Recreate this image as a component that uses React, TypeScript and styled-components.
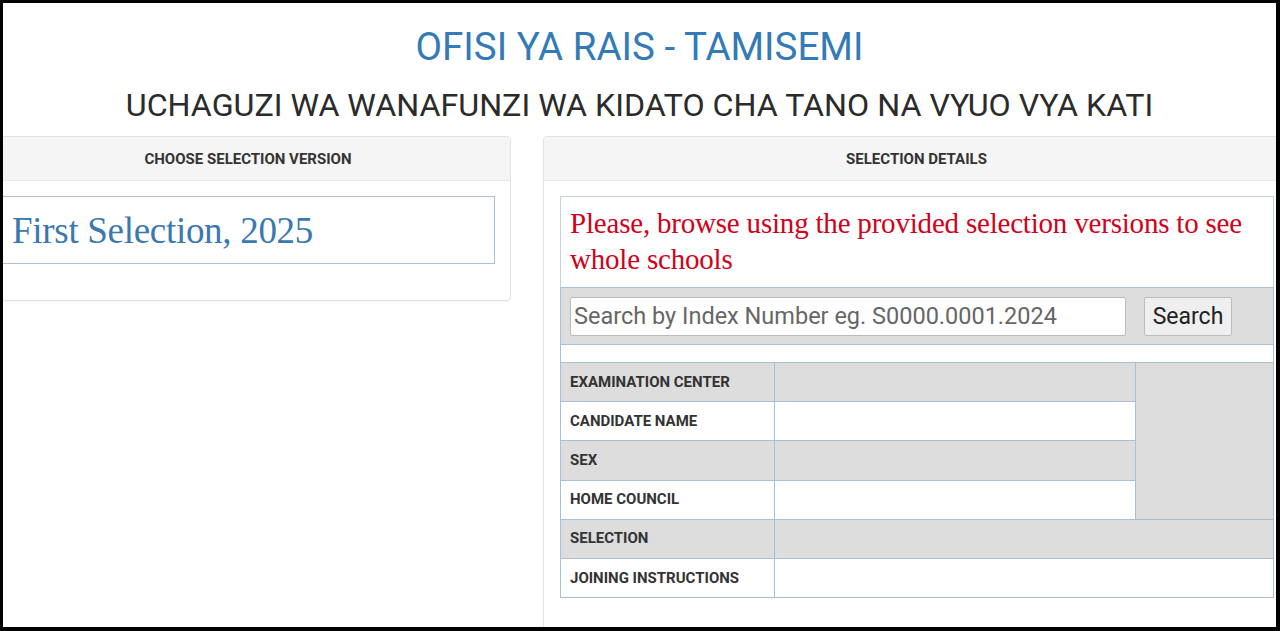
import * as React from "react";
import styled, { createGlobalStyle } from "styled-components";

const GlobalStyle = createGlobalStyle`
  html, body {
    margin: 0;
    padding: 0;
    background: #000;
  }
  body {
    font-family: Roboto, "Liberation Sans", sans-serif;
    color: #333;
  }
`;

const Frame = styled.div`
  box-sizing: border-box;
  width: 1280px;
  height: 631px;
  border-style: solid;
  border-color: #000;
  border-width: 3px 4px 4px 3px;
  background: #fff;
  overflow: hidden;
`;

const Heading = styled.h1<{ $accent?: boolean }>`
  margin: 0;
  text-align: center;
  font-weight: 400;
  font-size: ${(p) => (p.$accent ? "38.5px" : "32.2px")};
  line-height: 1;
  color: ${(p) => (p.$accent ? "#337ab7" : "#2b2b2b")};
  white-space: nowrap;
`;

const Header = styled.header`
  display: flex;
  flex-direction: column;
  gap: 22px;
  padding: 25px 0 0;
  height: 133px;
  box-sizing: border-box;
`;

const Row = styled.div`
  display: flex;
  gap: 32px;
  margin-left: -18px;
  align-items: flex-start;
`;

const Panel = styled.section<{ $width: number }>`
  flex: 0 0 ${(p) => p.$width}px;
  box-sizing: border-box;
  border: 1px solid #e3e3e3;
  border-radius: 4px;
  background: #fff;
  box-shadow: 0 1px 1px rgba(0, 0, 0, 0.04);
`;

const PanelHeading = styled.div`
  height: 43px;
  display: flex;
  align-items: center;
  justify-content: center;
  background: #f5f5f5;
  border-bottom: 1px solid #e8e8e8;
  border-radius: 3px 3px 0 0;
  font-size: 15px;
  font-weight: 700;
  color: #333;
`;

const PanelBody = styled.div<{ $bottom?: number; $left?: number }>`
  padding: 15px 15px ${(p) => p.$bottom ?? 15}px ${(p) => p.$left ?? 15}px;
`;

const VersionLink = styled.a`
  display: block;
  box-sizing: border-box;
  height: 68px;
  padding: 12px 10px 0;
  border: 1px solid #a9bfd2;
  font-family: "Liberation Serif", "DejaVu Serif", serif;
  font-size: 37px;
  color: #3a78b0;
  text-decoration: none;
  letter-spacing: -0.3px;
`;

const DetailsTable = styled.table`
  width: 100%;
  border-collapse: collapse;
  table-layout: fixed;
  font-size: 15px;
`;

const Cell = styled.td<{ $shade?: boolean }>`
  border: 1px solid #a9bfd2;
  height: 39.2px;
  padding: 0 9px 1px;
  box-sizing: border-box;
  background: ${(p) => (p.$shade ? "#dddddd" : "#fff")};
`;

const Label = styled(Cell)`
  font-weight: 700;
  color: #333;
  white-space: nowrap;
`;

const Notice = styled.td`
  border: 1px solid #c4d3e0;
  border-bottom-color: #a9bfd2;
  height: 91px;
  padding: 8px 9px 0;
  box-sizing: border-box;
  vertical-align: top;
  font-family: "Liberation Serif", "DejaVu Serif", serif;
  font-size: 29px;
  line-height: 36px;
  color: #d0021b;
  letter-spacing: -0.2px;
`;

const SearchCell = styled.td`
  border: 1px solid #a9bfd2;
  background: #dddddd;
  height: 57px;
  padding: 0 9px;
  box-sizing: border-box;
`;

const SearchForm = styled.form`
  display: flex;
  align-items: center;
  gap: 18px;
`;

const SearchInput = styled.input`
  width: 556px;
  height: 39px;
  box-sizing: border-box;
  border: 1px solid #bbb;
  border-radius: 2px;
  padding: 0 3px;
  font-family: Roboto, "Liberation Sans", sans-serif;
  font-size: 23.5px;
  color: #333;
  background: #fff;
  &::placeholder {
    color: #666;
  }
`;

const SearchButton = styled.button`
  height: 39px;
  width: 88px;
  box-sizing: border-box;
  border: 1px solid #bdbdbd;
  border-radius: 2px;
  background: #efefef;
  font-family: Roboto, "Liberation Sans", sans-serif;
  font-size: 23px;
  color: #222;
  padding: 0;
`;

const Spacer = styled.td`
  border: 1px solid #a9bfd2;
  height: 17px;
  padding: 0;
`;

export default function App() {
  return (
    <Frame>
      <GlobalStyle />
      <Header>
        <Heading $accent>OFISI YA RAIS - TAMISEMI</Heading>
        <Heading as="h2">
          UCHAGUZI WA WANAFUNZI WA KIDATO CHA TANO NA VYUO VYA KATI
        </Heading>
      </Header>
      <Row>
        <Panel $width={526}>
          <PanelHeading>CHOOSE SELECTION VERSION</PanelHeading>
          <PanelBody $bottom={36}>
            <VersionLink href="#">First Selection, 2025</VersionLink>
          </PanelBody>
        </Panel>
        <Panel $width={747}>
          <PanelHeading>SELECTION DETAILS</PanelHeading>
          <PanelBody $bottom={40} $left={16}>
            <DetailsTable>
              <colgroup>
                <col style={{ width: 214 }} />
                <col style={{ width: 361 }} />
                <col />
              </colgroup>
              <tbody>
                <tr>
                  <Notice colSpan={3}>
                    Please, browse using the provided selection versions to see
                    whole schools
                  </Notice>
                </tr>
                <tr>
                  <SearchCell colSpan={3}>
                    <SearchForm onSubmit={(e) => e.preventDefault()}>
                      <SearchInput placeholder="Search by Index Number eg. S0000.0001.2024" />
                      <SearchButton type="submit">Search</SearchButton>
                    </SearchForm>
                  </SearchCell>
                </tr>
                <tr>
                  <Spacer colSpan={3} />
                </tr>
                <tr>
                  <Label $shade>EXAMINATION CENTER</Label>
                  <Cell $shade />
                  <Cell $shade rowSpan={4} />
                </tr>
                <tr>
                  <Label>CANDIDATE NAME</Label>
                  <Cell />
                </tr>
                <tr>
                  <Label $shade>SEX</Label>
                  <Cell $shade />
                </tr>
                <tr>
                  <Label>HOME COUNCIL</Label>
                  <Cell />
                </tr>
                <tr>
                  <Label $shade>SELECTION</Label>
                  <Cell $shade colSpan={2} />
                </tr>
                <tr>
                  <Label>JOINING INSTRUCTIONS</Label>
                  <Cell colSpan={2} />
                </tr>
              </tbody>
            </DetailsTable>
          </PanelBody>
        </Panel>
      </Row>
    </Frame>
  );
}
